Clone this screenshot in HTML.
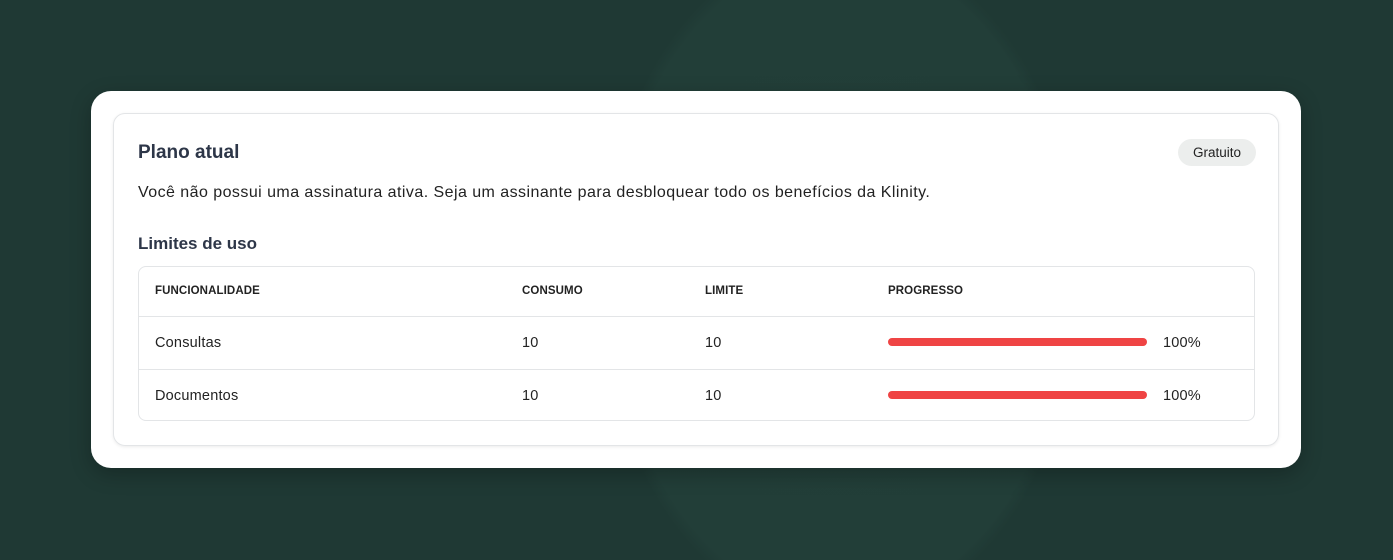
<!DOCTYPE html><html><head><style>
html,body{margin:0;width:1393px;height:560px;overflow:hidden}
body{background:#1f3934;font-family:"Liberation Sans",sans-serif}
.wrap{position:relative;width:1393px;height:560px;overflow:hidden;background:radial-gradient(ellipse 240px 340px at 840px 280px,#233f39 0%,#223e38 95%,#1f3934 100%)}
.outer{position:absolute;left:91px;top:91px;width:1210px;height:377px;background:#fff;border-radius:20px;box-shadow:0 6px 20px rgba(0,0,0,.25)}
.inner{position:absolute;left:22px;top:22px;width:1164px;height:331px;border:1px solid #e3e5e7;border-radius:12px;box-shadow:0 1px 3px rgba(0,0,0,.08)}
.t{position:absolute;left:24px;color:#2d3648;font-weight:bold}
.badge{position:absolute;left:1064px;top:25px;width:78px;height:27px;border-radius:14px;background:#eceeed;font-size:13.5px;color:#222;text-align:center;line-height:27px}
.p{position:absolute;left:24px;top:70px;font-size:16px;letter-spacing:.45px;color:#222}
.tbl{position:absolute;left:24px;top:152px;width:1115px;height:153px;border:1px solid #e3e5e7;border-radius:8px}
.row{position:absolute;left:0;width:1115px;border-top:1px solid #e3e5e7}
.c{position:absolute;font-size:14.5px;color:#222;letter-spacing:.2px}
.h{font-size:11.5px;font-weight:bold;color:#222;letter-spacing:.1px}
.bar{position:absolute;left:749px;width:259px;height:8px;border-radius:4px;background:#ef4444}
</style></head><body><div class="wrap">
<div class="outer"><div class="inner">
<div class="t" style="top:28px;font-size:19px">Plano atual</div>
<div class="badge">Gratuito</div>
<div class="p">Você não possui uma assinatura ativa. Seja um assinante para desbloquear todo os benefícios da Klinity.</div>
<div class="t" style="top:120px;font-size:17px">Limites de uso</div>
<div class="tbl">
<div class="c h" style="left:16px;top:18px">FUNCIONALIDADE</div>
<div class="c h" style="left:383px;top:18px">CONSUMO</div>
<div class="c h" style="left:566px;top:18px">LIMITE</div>
<div class="c h" style="left:749px;top:18px">PROGRESSO</div>
<div class="row" style="top:49px;height:52px">
<div class="c" style="left:16px;top:18px">Consultas</div>
<div class="c" style="left:383px;top:18px">10</div>
<div class="c" style="left:566px;top:18px">10</div>
<div class="bar" style="top:21px"></div>
<div class="c" style="left:1024px;top:18px">100%</div>
</div>
<div class="row" style="top:102px;height:51px">
<div class="c" style="left:16px;top:18px">Documentos</div>
<div class="c" style="left:383px;top:18px">10</div>
<div class="c" style="left:566px;top:18px">10</div>
<div class="bar" style="top:21px"></div>
<div class="c" style="left:1024px;top:18px">100%</div>
</div>
</div>
</div></div>
</div></body></html>
